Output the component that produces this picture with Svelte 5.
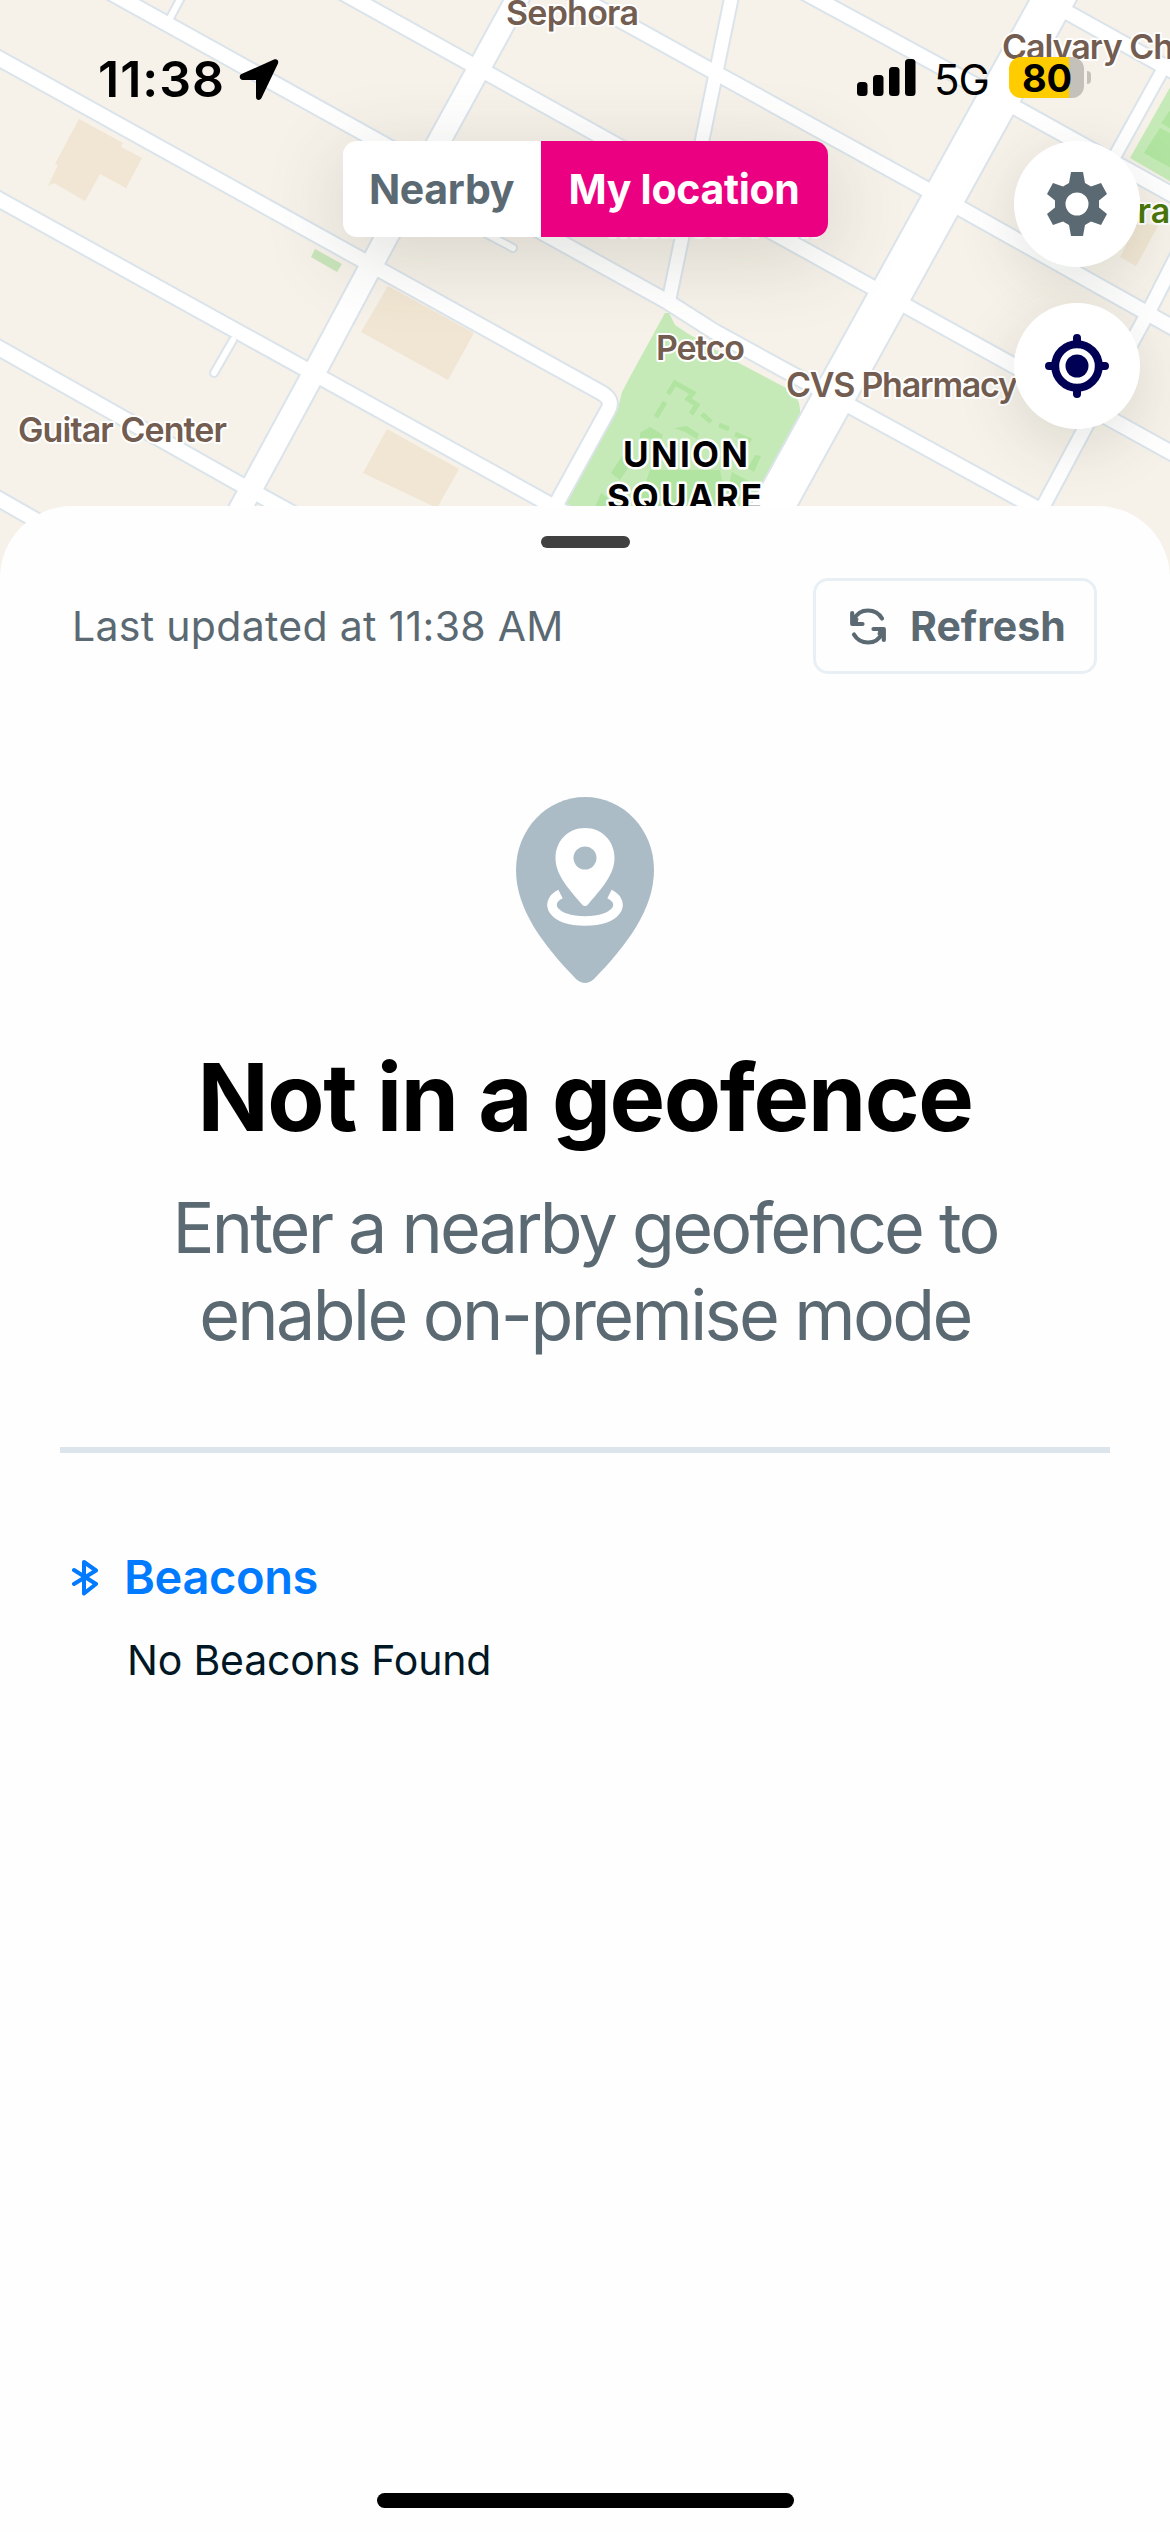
<script>
  const casing = '#dbe4eb';
  const roads = [
    { d: 'M-10 53.4L601 392.500Q614 400 608 410L548 519', w: 14 },
    { d: 'M106 -10L668 302L715 332L830 395L1040 510', w: 14 },
    { d: 'M338 -10L803 249L1180 457.5', w: 14 },
    { d: 'M566 -10L714 72L926 189L1180 331.6', w: 14 },
    { d: 'M800 -10L982 89L1180 199', w: 14 },
    { d: 'M1045 0L1180 75', w: 14 },
    { d: 'M-10 194.5L551 505L580 521', w: 14 },
    { d: 'M-10 343L238 483L310 523', w: 14 },
    { d: 'M-10 494L60 534', w: 14 },
    { d: 'M732 -5L702 141L669 300', w: 12.5 },
    { d: 'M1162 71L1085 210', w: 11.5 },
    { d: 'M1180 250L1150 309L1085 428L1038 516', w: 13 },
    { d: 'M522 -10L386.5 237L314 373L232 524', w: 21.5 },
    { d: 'M1058.5 -10L825 413L765 522', w: 40 },
    { d: 'M233 340L214 373', w: 6 },
    { d: 'M184 -8L169 20', w: 6 },
    { d: 'M470 225L513 248', w: 6 }
  ];
  const blocks = [
    'M79 119L123 143L121 147L142 158L126 188L100 174L85 201L54 183L48 186L58 165L55 164Z',
    'M388 286L474 333L448 380L361 332Z',
    'M387 429L459 469L437 508L363 473Z',
    'M1138 222L1158 226L1136 266L1120 257Z'
  ];
</script>

<svelte:head><title>Geofence</title></svelte:head>

<main>
  <section class="map">
    <svg class="tiles" viewBox="0 0 1170 580" aria-hidden="true">
      <rect width="1170" height="580" fill="#f6f1e9" />
      {#each blocks as d}<path {d} fill="#f1e6d3" />{/each}
      <path d="M315 249L342 264L337 272L311 257Z" fill="#c9e5bb" />
      <path d="M665 313H669L675 325L687 333L733 360L790 390Q799 398 800 408V440L760 520H548L618 408L622 392L631 375Z" fill="#c5eab7" />
      <path d="M668 394L675 383L693 393L688 399L697 405L691 414M665 402L656 417M702 414L711 422M719 425L729 429M735 434L751 441" fill="none" stroke="#b0e4a0" stroke-width="5" />
      <path d="M674 428L687 426L699 434L697 439L685 432ZM640 433L650 427L663 435L660 442L648 438L640 450ZM611 473L622 456L632 462L620 480ZM748 468L755 455L761 456L754 472ZM650 470H720L728 510H636ZM732 472L750 482L742 500L727 492ZM594 510L601 493L608 498L604 510Z" fill="#b0e4a0" />
      <path d="M1180 70L1130 158L1180 187Z" fill="#c5eab7" />
      <path d="M1180 96L1161 123L1180 134ZM1160 128L1144 153L1180 173V138Z" fill="#b0e4a0" />
      {#each roads as r}<path d={r.d} fill="none" stroke={casing} stroke-width={r.w + 4} stroke-linecap="round" />{/each}
      {#each roads as r}<path d={r.d} fill="none" stroke="#fff" stroke-width={r.w} stroke-linecap="round" />{/each}
      <g class="poi">
        <text x="506" y="25" textLength="133">Sephora</text>
        <text x="1002" y="59" textLength="172">Calvary Ch</text>
        <text x="18" y="442" textLength="209">Guitar Center</text>
        <text x="656" y="360" textLength="89">Petco</text>
        <text x="786" y="397" textLength="232">CVS Pharmacy</text>
        <text x="608" y="237" textLength="212">Mattress Firm</text>
        <text class="green" x="1117" y="223">Tran</text>
      </g>
      <g class="area">
        <text x="623" y="467" textLength="125">UNION</text>
        <text x="607" y="510" textLength="155">SQUARE</text>
      </g>
    </svg>

    <div class="status">
      <div class="left">
        <span class="time">11:38</span>
        <svg width="42" height="45" viewBox="0 0 42 45"><path d="M36 2.5L3.500 17C.5 18.500 1.500 23 5 23H18V40C18 43.500 22 44 23.500 41L40 6.500C41 3.500 39 1.500 36 2.500Z" /></svg>
      </div>
      <div class="right">
        <svg width="60" height="38" viewBox="0 0 60 38"><rect y="23" width="10.500" height="14" rx="3.500" /><rect x="16" y="16" width="10.500" height="21" rx="3.500" /><rect x="32" y="8" width="10.500" height="29" rx="3.500" /><rect x="48" width="10.500" height="37" rx="3.500" /></svg>
        <span class="net">5G</span>
        <span class="battery">80</span>
        <i class="nub"></i>
      </div>
    </div>

    <div class="toggle">
      <button>Nearby</button><button class="on">My location</button>
    </div>

    <div class="fabs">
      <button aria-label="Settings">
        <svg width="60" height="64" viewBox="0 0 60 64"><path fill="#5b6972" fill-rule="evenodd" d="M24 0H36L38 11L44 14.500L54 11L60 22L52 28.500V35.500L60 42L54 53L44 49.500L38 53L36 64H24L22 53L16 49.500L6 53L0 42L8 35.500V28.500L0 22L6 11L16 14.500L22 11ZM30 20.500A11.500 11.500 0 1 0 30 43.500A11.500 11.500 0 1 0 30 20.500Z" /></svg>
      </button>
      <button aria-label="Locate me">
        <svg width="64" height="64" viewBox="0 0 64 64" fill="none" stroke="#000054" stroke-width="8"><circle cx="32" cy="32" r="21.800" /><circle cx="32" cy="32" r="11.500" fill="#000054" stroke="none" /><path stroke-linecap="round" d="M32 4V9M32 55V60M4 32H9M55 32H60" /></svg>
      </button>
    </div>
  </section>

  <section class="sheet">
    <div class="grip"></div>
    <div class="bar">
      <span class="updated">Last updated at 11:38 AM</span>
      <button class="refresh">
        <svg width="36" height="37" viewBox="0 0 36 37" fill="none" stroke="#5b6972" stroke-width="4.200" stroke-linecap="round" stroke-linejoin="round"><path d="M32 10.500C26 0 9.500 -.5 4.500 11M2.200 5V16H12.500" /><path d="M4 26.500C10 37 26.500 37.500 31.500 26M33.800 32V21H23.500" /><path fill="#5b6972" d="M2.500 9V15.500H7L8 11ZM33.500 28V21.500H29L28 26Z" stroke-width="1" /></svg>
        <span>Refresh</span>
      </button>
    </div>

    <svg class="pin" width="140" height="188" viewBox="0 0 140 188"><path fill="#acbcc7" d="M70 0C108 0 139 32 139 73C139 112 112 148 79 182Q70 190 61 182C28 148 1 112 1 73C1 32 32 0 70 0Z" /><path fill="#fff" fill-rule="evenodd" d="M70 31C87 31 99.500 44 99.500 61C99.500 78 86 92 73 107.500Q70 110.500 67 107.500C54 92 40.500 78 40.500 61C40.500 44 53 31 70 31ZM70 49.500A11.500 11.500 0 1 0 70 72.500A11.500 11.500 0 1 0 70 49.500Z" /><path fill="none" stroke="#fff" stroke-width="9.500" d="M45.500 97C28 106 38 124 70 124S112 106 94.500 97" /></svg>

    <h1>Not in a geofence</h1>
    <p class="hint"><span class="l1">Enter a nearby geofence to</span><br /><span class="l2">enable on-premise mode</span></p>
    <hr />

    <div class="beacons">
      <svg width="26" height="38" viewBox="0 0 26 38" fill="none" stroke="#007aff" stroke-width="4" stroke-linecap="round" stroke-linejoin="round"><path d="M2 12L24 26L12 35.500V4L24 12.500L2 26" /></svg>
      <h2>Beacons</h2>
    </div>
    <p class="none">No Beacons Found</p>
    <div class="home"></div>
  </section>
</main>

<style>
  :global(body) { background: #fff; }
  main { width: 1170px; height: 2532px; display: flex; flex-direction: column; font-family: Inter, "Liberation Sans", sans-serif; overflow: hidden; background: #fefefe; }
  button { border: 0; margin: 0; padding: 0; font: inherit; background: none; }
  .map { height: 506px; position: relative; flex: none; }
  .tiles { position: absolute; left: 0; top: 0; width: 1170px; height: 580px; }
  .poi text { font: 600 34px Inter, sans-serif; fill: #735c50; stroke: #fff; stroke-width: 4px; paint-order: stroke; stroke-linejoin: round; }
  .poi .green { fill: #497607; }
  .area text { font: 700 35px Inter, sans-serif; fill: #000; stroke: #fff; stroke-width: 5px; paint-order: stroke; stroke-linejoin: round; }
  .status { position: relative; display: flex; justify-content: space-between; padding: 57px 79px 0 98px; height: 44px; }
  .left, .right { display: flex; }
  .time { font-size: 50px; font-weight: 600; line-height: 44px; width: 127px; letter-spacing: 1px; margin-right: 13px; }
  .right svg { margin-top: 2px; margin-right: 17px; }
  .net { font-size: 42px; line-height: 46px; width: 58px; letter-spacing: -1px; margin-right: 17px; }
  .battery { width: 75px; height: 41px; border-radius: 12px; background: linear-gradient(90deg, #fc0 60px, #c4c0ba 60px); font-size: 38px; font-weight: 700; line-height: 42px; text-indent: 13px; letter-spacing: -.3px; }
  .nub { width: 4px; height: 13px; border-radius: 0 6px 6px 0; background: #c4c0ba; margin: 14px 0 0 3px; }
  .toggle { position: relative; display: flex; width: 485px; height: 96px; margin: 40px auto 0; border-radius: 14px; background: #fff; box-shadow: 0 18px 80px rgba(70, 80, 60, .18); }
  .toggle button { width: 198px; color: #5b6972; font-size: 41px; font-weight: 700; letter-spacing: -.3px; }
  .toggle .on { width: 287px; background: #ec0082; color: #fff; border-radius: 0 14px 14px 0; }
  .fabs { position: absolute; right: 30px; top: 141px; display: flex; flex-direction: column; gap: 36px; }
  .fabs button { width: 126px; height: 126px; border-radius: 50%; background: #fff; display: grid; place-items: center; box-shadow: 0 16px 60px rgba(70, 80, 60, .15); }
  .sheet { position: relative; flex: 1; background: #fefefe; border-radius: 72px 72px 0 0; display: flex; flex-direction: column; align-items: center; }
  .grip { width: 89px; height: 12px; margin-top: 30px; border-radius: 6px; background: #404040; flex: none; }
  .bar { width: 1026px; margin-top: 30px; display: flex; justify-content: space-between; align-items: center; }
  .updated { color: #5b6972; font-size: 41px; letter-spacing: .3px; }
  .refresh { box-sizing: border-box; width: 284px; height: 96px; margin-right: 1px; border: 3px solid #e8f0f6; border-radius: 15px; display: flex; align-items: center; padding-left: 34px; gap: 24px; color: #5b6972; font-size: 41px; font-weight: 700; }
  .pin { margin-top: 123px; flex: none; }
  h1 { margin: 55px 0 0; font-size: 93.500px; font-weight: 700; line-height: 114px; letter-spacing: -1.400px; color: #000; }
  .hint { margin: 30px 0 0; color: #5b6972; font-size: 70px; line-height: 87px; text-align: center; }
  .l1 { letter-spacing: -2.800px; }
  .l2 { letter-spacing: -2.600px; }
  hr { width: 1050px; height: 6px; border: 0; margin: 89px 0 0; background: #dde5ec; flex: none; }
  .beacons { width: 1026px; margin-top: 95px; display: flex; align-items: center; gap: 26px; }
  h2 { margin: 0; color: #007aff; font-size: 47px; line-height: 58px; font-weight: 600; letter-spacing: -.4px; }
  .none { width: 916px; margin: 29px 0 0; color: #001826; font-size: 41px; line-height: 50px; letter-spacing: -.2px; }
  .home { width: 417px; height: 15px; border-radius: 8px; background: #000; margin: auto 0 24px; }
</style>
